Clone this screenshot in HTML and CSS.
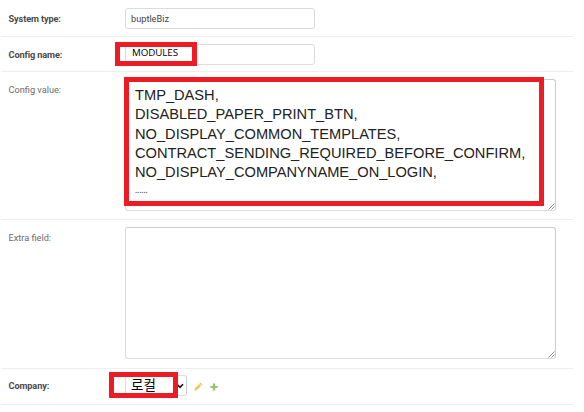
FILE: index.html
```html
<!DOCTYPE html>
<html lang="ko">
<head>
<meta charset="utf-8">
<title>Config</title>
<link rel="stylesheet" href="styles.css">
</head>
<body>
<form class="form">
  <div class="row row-first">
    <span class="label required">System type:</span>
    <div class="field input"><span class="t-system">buptleBiz</span></div>
  </div>
  <div class="row row-name">
    <span class="label required">Config name:</span>
    <div class="field input"><span class="t-name">MODULES</span><i class="mark mark-name"></i></div>
  </div>
  <div class="row row-value">
    <span class="label">Config value:</span>
    <div class="field area">
      <div class="lines">
        <span>TMP_DASH,</span>
        <span>DISABLED_PAPER_PRINT_BTN,</span>
        <span>NO_DISPLAY_COMMON_TEMPLATES,</span>
        <span>CONTRACT_SENDING_REQUIRED_BEFORE_CONFIRM,</span>
        <span>NO_DISPLAY_COMPANYNAME_ON_LOGIN,</span>
        <span class="dots">......</span>
      </div>
      <svg class="grip" width="7" height="7" viewBox="0 0 7 7"><path d="M.5 6.5l6-6M3.5 6.5l3-3"/></svg>
      <i class="mark mark-value"></i>
    </div>
  </div>
  <div class="row row-extra">
    <span class="label">Extra field:</span>
    <div class="field area"><svg class="grip" width="7" height="7" viewBox="0 0 7 7"><path d="M.5 6.5l6-6M3.5 6.5l3-3"/></svg></div>
  </div>
  <div class="row row-company">
    <span class="label required">Company:</span>
    <div class="field select">
      <span class="t-company">로컬</span>
      <svg class="chevron" width="8" height="6" viewBox="0 0 8 6"><path d="M1 1.3l3 3 3-3"/></svg>
      <i class="mark mark-company"></i>
    </div>
    <svg class="pencil" width="9" height="9" viewBox="0 0 9 9"><path class="body" d="M1.7 7.3l4.4-4.4"/><path class="body" d="M6.4 2.6l1.1-1.1"/><path class="tip" d="M.3 8.7l.6-2.3 1.7 1.7z"/></svg>
    <svg class="plus" width="8" height="8" viewBox="0 0 8 8"><path d="M4 .4v7.2M.4 4h7.2"/></svg>
  </div>
</form>
</body>
</html>
```
FILE: styles.css
```css
* { box-sizing: border-box; }
body { margin: 0; background: #fff; font-family: Roboto, "Noto Sans CJK KR", sans-serif; }
.form { width: 572px; margin-left: 1px; }
.row { display: flex; align-items: flex-start; border-bottom: 1px solid #eee; padding-top: 7px; }
.row-first { height: 37px; padding-top: 8px; }
.row-name { height: 35px; }
.row-value { height: 148px; }
.row-extra { height: 149px; }
.row-company { height: 36px; padding-top: 6px; }
.label { width: 116.5px; margin-left: 7.5px; padding-top: 5px; font-size: 9.2px; line-height: 12px; color: #6c6c6c; white-space: nowrap; }
.required { font-weight: 700; color: #4a4a4a; letter-spacing: -.12px; }
.field { position: relative; border: 1px solid #dcdcdc; border-radius: 3px; white-space: nowrap; }
.input { width: 190px; height: 21px; padding-left: 5px; }
.area { width: 431px; height: 132px; padding: 5px 9px; border-top-color: #ccc; border-right-color: #ccc; }
.select { width: 62px; height: 21px; padding-left: 5px; border-right-color: #ccc; }
.t-system { display: block; font-size: 9.2px; line-height: 20px; color: #444; }
.t-name { display: block; font: 9.8px/16px "Open Sans", sans-serif; letter-spacing: -.1px; color: #000; padding-left: 1px; }
.t-company { display: block; padding-top: 1px; font: 13.5px/14px "Noto Sans CJK KR", sans-serif; color: #000; }
.lines { font: 15.5px/19.3px "Liberation Sans", sans-serif; color: #222; transform: scaleX(.944); transform-origin: 0 0; }
.lines span { display: block; }
.lines .dots { font: bold 8px/19px "Liberation Sans", sans-serif; color: #665; }
.grip { position: absolute; right: 0; bottom: 0; }
.grip path { fill: none; stroke: #777; stroke-width: .8; }
.chevron { position: absolute; right: 2px; top: 7px; }
.chevron path { fill: none; stroke: #111; stroke-width: 1.6; }
.mark { position: absolute; border: 5px solid #ed1c24; }
.mark-name { left: -11px; top: -3px; width: 82px; height: 24px; }
.mark-value { left: -2px; top: -3px; width: 420px; height: 129px; }
.mark-company { left: -17px; top: -4px; width: 69px; height: 26px; }
.pencil { margin: 7px 0 0 7px; }
.pencil .body { fill: none; stroke: #efc75e; stroke-width: 2.8; }
.pencil .tip { fill: #dfba70; }
.plus { margin: 8px 0 0 7px; }
.plus path { fill: none; stroke: #93c763; stroke-width: 2.2; }
```
